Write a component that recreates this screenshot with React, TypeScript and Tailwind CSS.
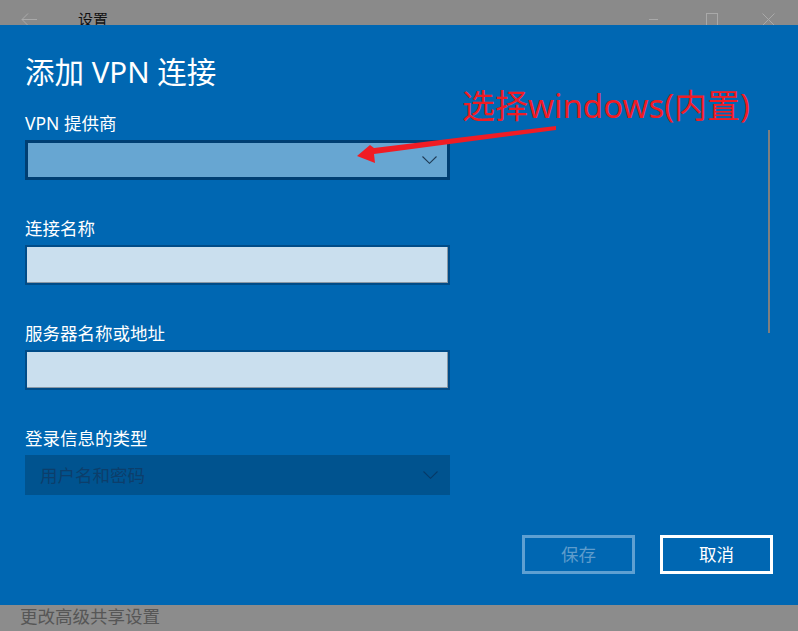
const font = "font-['Noto_Sans','Noto_Sans_CJK_SC',sans-serif]";

function Chevron({ className }: { className: string }) {
  return (
    <svg width="15" height="8" viewBox="0 0 15 8" className={className}>
      <path d="M0.5 0.5 L7.5 7.3 L14.5 0.5" fill="none" stroke="currentColor" strokeWidth="1.1" />
    </svg>
  );
}

function TitleBar() {
  return (
    <div className="flex h-[25px] shrink-0 items-start bg-[#8a8a8a] pr-[23px] text-[#a9a9a9]">
      <svg width="16" height="13" viewBox="0 0 16 13" className="ml-[21px] mt-[13px]">
        <path d="M7 0.5 L1 6.5 L7 12.5 M1 6.5 H16" fill="none" stroke="currentColor" strokeWidth="1" />
      </svg>
      <span className="ml-[41px] mt-[12px] text-[15px] leading-[15px] text-[#111]">设置</span>
      <div className="flex-1" />
      <svg width="9" height="2" viewBox="0 0 9 2" className="mt-[19px]">
        <path d="M0 0.5 H9" stroke="currentColor" strokeWidth="1" />
      </svg>
      <svg width="12" height="13" viewBox="0 0 12 13" className="ml-[48px] mt-[13px]">
        <rect x="0.5" y="0.5" width="11" height="12" fill="none" stroke="currentColor" strokeWidth="1" />
      </svg>
      <svg width="13" height="13" viewBox="0 0 13 13" className="ml-[44px] mt-[13px]">
        <path d="M0.5 0.5 L12.5 12.5 M12.5 0.5 L0.5 12.5" stroke="currentColor" strokeWidth="1" />
      </svg>
    </div>
  );
}

function Field({ label, children }: { label: string; children: React.ReactNode }) {
  return (
    <div className="flex w-[425px] flex-col">
      <div className="mb-[6px] text-[17.5px] leading-[22px] text-white">{label}</div>
      {children}
    </div>
  );
}

function TextBox() {
  return (
    <div className="h-[40px] border-2 border-[#004c88] bg-[#cadfee] shadow-[inset_-1px_-1px_0_#8a98a5]" />
  );
}

export default function App() {
  return (
    <div className={`flex h-[631px] w-[798px] flex-col overflow-hidden bg-[#8a8a8a] ${font}`}>
      <TitleBar />
      <main className="relative flex flex-1 flex-col bg-[#0067b2] pl-[25px] pt-[28px]">
        <h1 className="mb-[22px] text-[29.5px] font-normal leading-[37px] text-white">添加 VPN 连接</h1>

        <div className="flex flex-col gap-[37px]">
          <Field label="VPN 提供商">
            <div className="flex h-[40px] items-center justify-end border-[3px] border-[#003f73] bg-[#67a6d2] pr-[10px]">
              <Chevron className="text-[#1f3b55]" />
            </div>
          </Field>
          <Field label="连接名称">
            <TextBox />
          </Field>
          <Field label="服务器名称或地址">
            <TextBox />
          </Field>
          <Field label="登录信息的类型">
            <div className="flex h-[40px] items-center justify-between bg-[#00538f] pl-[15px] pr-[12px]">
              <span className="text-[17.5px] leading-[22px] text-[#0c3e6b]">用户名和密码</span>
              <Chevron className="text-[#063a68]" />
            </div>
          </Field>
        </div>

        <div className="mt-auto flex justify-end gap-[25px] pb-[31px] pr-[25px]">
          <button className="h-[39px] w-[113px] border-[3px] border-[#5ea0d2] text-[17.5px] text-[#5e9ccc]">保存</button>
          <button className="h-[39px] w-[113px] border-[3px] border-white text-[17.5px] text-white">取消</button>
        </div>

        <div className="absolute left-[768px] top-[105px] h-[203px] w-[2px] bg-[#7f7f7f]" />

        <div className="absolute left-[462px] top-[61px] text-[33px] leading-[40px] text-[#f01c24]">
          选择windows(内置)
        </div>
        <svg className="pointer-events-none absolute left-0 top-0" width="798" height="580" viewBox="0 25 798 580">
          <polygon
            points="556,126 556,130 374,154 375,163 357,156 370,145 374,148"
            fill="#f01c24"
          />
        </svg>
      </main>
      <div className="h-[26px] shrink-0 bg-[#8c8c8c] pl-[20px]">
        <span className="text-[17.5px] leading-[18px] text-[#565656]">更改高级共享设置</span>
      </div>
    </div>
  );
}
